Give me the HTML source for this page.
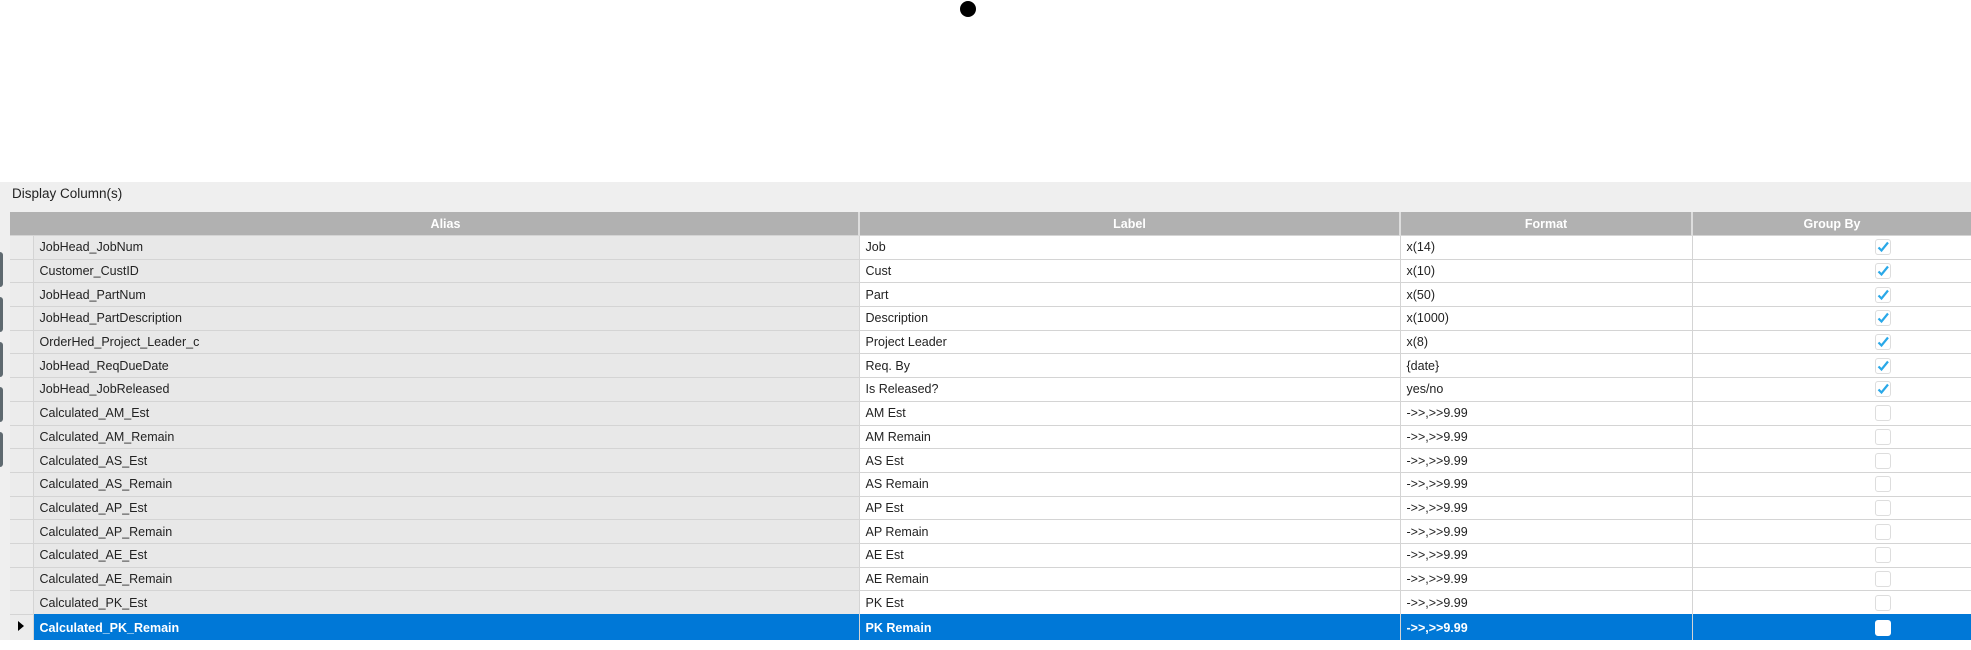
<!DOCTYPE html>
<html><head><style>
body{margin:0;width:1971px;height:650px;background:#fff;position:relative;overflow:hidden;font-family:"Liberation Sans",Arial,sans-serif;font-size:12.5px;color:#222}
.dot{position:absolute;left:960px;top:1px;width:16px;height:16px;border-radius:50%;background:#000}
.panel{position:absolute;left:0;top:182px;width:1971px;height:468px;background:#efefef}
.title{position:absolute;left:12px;top:186px;font-size:13.5px;color:#222}
.tab{position:absolute;left:0;width:3px;height:35px;background:#5f6a70;border-radius:0 3px 3px 0}
table{position:absolute;left:10px;top:212px;border-collapse:collapse;table-layout:fixed;width:1961px}
th{background:#b1b1b1;color:#fff;font-weight:bold;height:23px;padding:0;border-left:2px solid #ddd;text-align:center;font-size:12.5px}
td{height:22.7px;padding:0 0 0 6px;border-top:1px solid #d4d4d4;border-left:1px solid #d4d4d4;white-space:nowrap;overflow:hidden;background:#fff}
td.rh{background:#ececec;border-left:none;padding:0}
td.al{background:#e8e8e8}
td.cb{text-align:left;padding:0 0 0 182px}
.box{display:inline-block;width:14px;height:14px;border:1px solid #ddd;border-radius:3px;background:#fff;vertical-align:middle;position:relative}
.box svg{position:absolute;left:0;top:0}
tr.sel td{background:#0078d7;color:#fff;font-weight:bold;border-top-color:#0078d7}
tr.sel td.rh{background:#ececec;border-top-color:#d4d4d4}
</style></head><body>
<div class="dot"></div>
<div class="panel"></div>
<div class="title">Display Column(s)</div>
<div class="tab" style="top:252px"></div>
<div class="tab" style="top:297px"></div>
<div class="tab" style="top:342px"></div>
<div class="tab" style="top:387px"></div>
<div class="tab" style="top:432px"></div>
<table>
<colgroup><col style="width:23px"><col style="width:826px"><col style="width:541px"><col style="width:292px"><col style="width:279px"></colgroup>
<tr><th style="border-left:none"></th><th style="border-left:none">Alias</th><th>Label</th><th>Format</th><th>Group By</th></tr>
<tr><td class="rh"></td><td class="al">JobHead_JobNum</td><td>Job</td><td>x(14)</td><td class="cb"><span class="box"><svg width="14" height="14"><path d="M2.5 7.5 L5.5 10.5 L12 2.5" stroke="#29a8e8" stroke-width="2.2" fill="none"/></svg></span></td></tr>
<tr><td class="rh"></td><td class="al">Customer_CustID</td><td>Cust</td><td>x(10)</td><td class="cb"><span class="box"><svg width="14" height="14"><path d="M2.5 7.5 L5.5 10.5 L12 2.5" stroke="#29a8e8" stroke-width="2.2" fill="none"/></svg></span></td></tr>
<tr><td class="rh"></td><td class="al">JobHead_PartNum</td><td>Part</td><td>x(50)</td><td class="cb"><span class="box"><svg width="14" height="14"><path d="M2.5 7.5 L5.5 10.5 L12 2.5" stroke="#29a8e8" stroke-width="2.2" fill="none"/></svg></span></td></tr>
<tr><td class="rh"></td><td class="al">JobHead_PartDescription</td><td>Description</td><td>x(1000)</td><td class="cb"><span class="box"><svg width="14" height="14"><path d="M2.5 7.5 L5.5 10.5 L12 2.5" stroke="#29a8e8" stroke-width="2.2" fill="none"/></svg></span></td></tr>
<tr><td class="rh"></td><td class="al">OrderHed_Project_Leader_c</td><td>Project Leader</td><td>x(8)</td><td class="cb"><span class="box"><svg width="14" height="14"><path d="M2.5 7.5 L5.5 10.5 L12 2.5" stroke="#29a8e8" stroke-width="2.2" fill="none"/></svg></span></td></tr>
<tr><td class="rh"></td><td class="al">JobHead_ReqDueDate</td><td>Req. By</td><td>{date}</td><td class="cb"><span class="box"><svg width="14" height="14"><path d="M2.5 7.5 L5.5 10.5 L12 2.5" stroke="#29a8e8" stroke-width="2.2" fill="none"/></svg></span></td></tr>
<tr><td class="rh"></td><td class="al">JobHead_JobReleased</td><td>Is Released?</td><td>yes/no</td><td class="cb"><span class="box"><svg width="14" height="14"><path d="M2.5 7.5 L5.5 10.5 L12 2.5" stroke="#29a8e8" stroke-width="2.2" fill="none"/></svg></span></td></tr>
<tr><td class="rh"></td><td class="al">Calculated_AM_Est</td><td>AM Est</td><td>-&gt;&gt;,&gt;&gt;9.99</td><td class="cb"><span class="box"></span></td></tr>
<tr><td class="rh"></td><td class="al">Calculated_AM_Remain</td><td>AM Remain</td><td>-&gt;&gt;,&gt;&gt;9.99</td><td class="cb"><span class="box"></span></td></tr>
<tr><td class="rh"></td><td class="al">Calculated_AS_Est</td><td>AS Est</td><td>-&gt;&gt;,&gt;&gt;9.99</td><td class="cb"><span class="box"></span></td></tr>
<tr><td class="rh"></td><td class="al">Calculated_AS_Remain</td><td>AS Remain</td><td>-&gt;&gt;,&gt;&gt;9.99</td><td class="cb"><span class="box"></span></td></tr>
<tr><td class="rh"></td><td class="al">Calculated_AP_Est</td><td>AP Est</td><td>-&gt;&gt;,&gt;&gt;9.99</td><td class="cb"><span class="box"></span></td></tr>
<tr><td class="rh"></td><td class="al">Calculated_AP_Remain</td><td>AP Remain</td><td>-&gt;&gt;,&gt;&gt;9.99</td><td class="cb"><span class="box"></span></td></tr>
<tr><td class="rh"></td><td class="al">Calculated_AE_Est</td><td>AE Est</td><td>-&gt;&gt;,&gt;&gt;9.99</td><td class="cb"><span class="box"></span></td></tr>
<tr><td class="rh"></td><td class="al">Calculated_AE_Remain</td><td>AE Remain</td><td>-&gt;&gt;,&gt;&gt;9.99</td><td class="cb"><span class="box"></span></td></tr>
<tr><td class="rh"></td><td class="al">Calculated_PK_Est</td><td>PK Est</td><td>-&gt;&gt;,&gt;&gt;9.99</td><td class="cb"><span class="box"></span></td></tr>
<tr class="sel"><td class="rh"><svg width="23" height="22"><path d="M8 6 L14 11 L8 16 Z" fill="#000"/></svg></td><td class="al">Calculated_PK_Remain</td><td>PK Remain</td><td>-&gt;&gt;,&gt;&gt;9.99</td><td class="cb"><span class="box" style="border-color:#fff"></span></td></tr>
</table>
<div style="position:absolute;left:0;top:640px;width:1971px;height:10px;background:#fff"></div>
</body></html>
